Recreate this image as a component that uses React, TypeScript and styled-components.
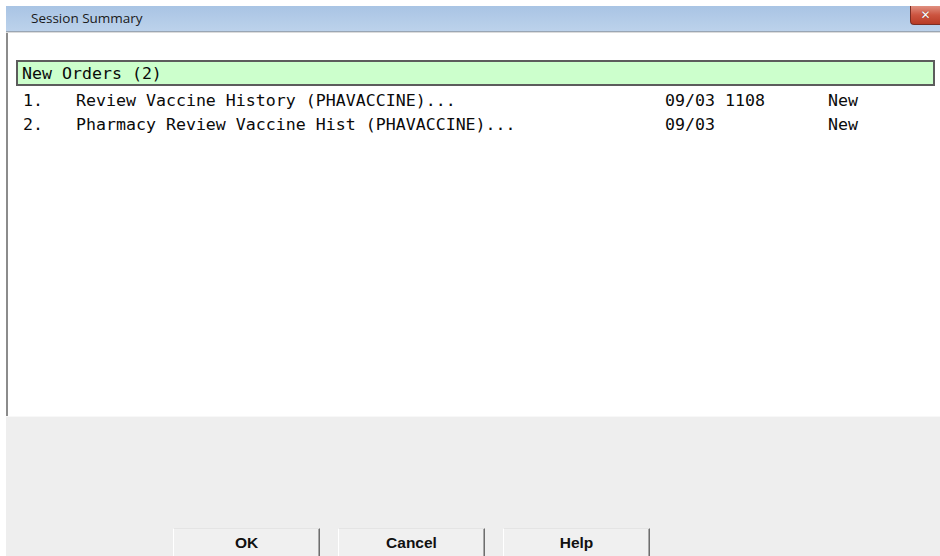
import React from 'react';
import styled, { createGlobalStyle } from 'styled-components';

const GlobalStyle = createGlobalStyle`
  html, body {
    margin: 0;
    padding: 0;
    background: #ffffff;
    overflow: hidden;
  }
  #root {
    width: 940px;
    height: 556px;
  }
`;

const Page = styled.div`
  width: 940px;
  height: 556px;
  padding: 6px 0 0 6px;
  box-sizing: border-box;
  background: #ffffff;
  overflow: hidden;
`;

const Window = styled.div`
  height: 100%;
  display: flex;
  flex-direction: column;
`;

const TitleBar = styled.div`
  flex: none;
  height: 25px;
  display: flex;
  align-items: center;
  justify-content: space-between;
  padding-left: 25px;
  background: linear-gradient(#a9c4e4, #bcd2eb);
  border-bottom: 1px solid #9aa6b4;
  box-shadow: 0 1px 0 #dcdcdc;
  margin-bottom: 1px;
`;

const Title = styled.span`
  font-family: 'Open Sans', 'Noto Sans', sans-serif;
  font-size: 13.5px;
  color: #1a1a1a;
  margin-top: -2px;
`;

const CloseButton = styled.div`
  flex: none;
  align-self: flex-start;
  width: 30px;
  height: 19px;
  box-sizing: border-box;
  border: 1px solid #7a2e24;
  border-right: none;
  border-top: none;
  border-radius: 0 0 0 4px;
  background: linear-gradient(#e09080, #cc5440 50%, #b83c26);
  display: flex;
  align-items: center;
  justify-content: center;
  color: #ffffff;
  font-family: 'DejaVu Sans', sans-serif;
  font-weight: bold;
  font-size: 12px;
  text-shadow: 0 0 1px #5a1a10;
`;

const Body = styled.div`
  flex: none;
  height: 383px;
  box-sizing: border-box;
  background: #ffffff;
  border-left: 2px solid #8c8c8c;
  padding: 27px 5px 0 8px;
  font-family: 'DejaVu Sans Mono', 'Liberation Mono', monospace;
  font-size: 16.6px;
  color: #0a0a0a;
`;

const SectionHeader = styled.div`
  height: 26px;
  box-sizing: border-box;
  border: 2px solid #5c5c5c;
  background: #ccffcc;
  padding: 2px 0 0 4px;
  display: flex;
  align-items: center;
  line-height: 1;
`;

const OrderList = styled.div`
  padding-top: 3px;
`;

const OrderRow = styled.div`
  display: grid;
  grid-template-columns: 53px 589px 163px auto;
  height: 24px;
  align-items: center;
  padding-left: 7px;
  line-height: 1;
  white-space: pre;
`;

const Footer = styled.div`
  flex: none;
  height: 140px;
  box-sizing: border-box;
  overflow: hidden;
  background: #eeeeee;
  border-top: 1px solid #f8f8f8;
  display: flex;
  align-items: flex-start;
  padding: 111px 0 0 167px;
  gap: 18px;
`;

const DialogButton = styled.button`
  flex: none;
  width: 147px;
  height: 30px;
  box-sizing: border-box;
  background: #f0f0f0;
  border: 1px solid;
  border-color: #e4e4e4 #6e6e6e #6e6e6e #ffffff;
  box-shadow: inset -1px -1px 0 #a8a8a8;
  font-family: 'Liberation Sans', Arial, sans-serif;
  font-weight: bold;
  font-size: 15.5px;
  color: #111111;
  padding: 0;
`;

const orders = [
  { num: '1.', title: 'Review Vaccine History (PHAVACCINE)...', when: '09/03 1108', status: 'New' },
  { num: '2.', title: 'Pharmacy Review Vaccine Hist (PHAVACCINE)...', when: '09/03', status: 'New' },
];

const App: React.FC = () => {
  return (
    <Page>
      <GlobalStyle />
      <Window>
        <TitleBar>
          <Title>Session Summary</Title>
          <CloseButton>✕</CloseButton>
        </TitleBar>
        <Body>
          <SectionHeader>New Orders (2)</SectionHeader>
          <OrderList>
            {orders.map((o) => (
              <OrderRow key={o.num}>
                <span>{o.num}</span>
                <span>{o.title}</span>
                <span>{o.when}</span>
                <span>{o.status}</span>
              </OrderRow>
            ))}
          </OrderList>
        </Body>
        <Footer>
          <DialogButton>OK</DialogButton>
          <DialogButton>Cancel</DialogButton>
          <DialogButton>Help</DialogButton>
        </Footer>
      </Window>
    </Page>
  );
};

export default App;
